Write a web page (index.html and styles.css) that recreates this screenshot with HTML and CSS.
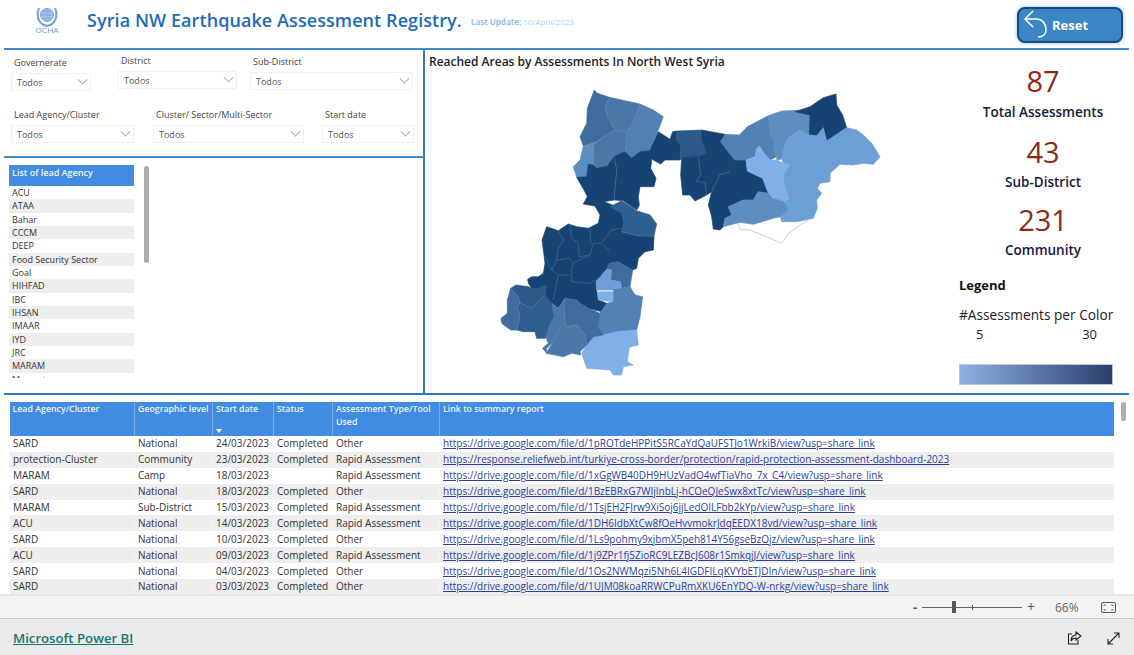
FILE: index.html
```html
<!DOCTYPE html>
<html lang="en">
<head>
<meta charset="utf-8">
<title>Syria NW Earthquake Assessment Registry</title>
<link rel="stylesheet" href="styles.css">
</head>
<body>
<div class="report">
  <header class="head">
    <div class="logo">
      <svg class="un" viewBox="0 0 24 24" width="24" height="24" fill="none" stroke="#7ba6d9">
        <circle cx="12" cy="11" r="6.5" fill="#a9c6e8" stroke-width="1"/>
        <ellipse cx="12" cy="11" rx="3" ry="6.5" stroke-width=".7"/>
        <path d="M5.5 11h13M6.500 7.500h11M6.500 14.500h11M12 4.500v13" stroke-width=".7"/>
        <path d="M4 4C1.500 9 2 16 7 20c2 1.500 3.500 1.500 5 2 1.500-.5 3-.5 5-2 5-4 5.500-11 3-16" stroke-width="2.200"/>
      </svg>
      <span class="ocha">OCHA</span>
    </div>
    <h1 class="title">Syria NW Earthquake Assessment Registry.</h1>
    <p class="update"><b>Last Update:</b> 10/April/2023</p>
    <button class="reset" type="button">
      <svg viewBox="0 0 30 36" width="30" height="36" fill="none" stroke="#fff" stroke-width="1.500">
        <path d="M12 4 4 12l8 8M4 12h11c8 0 10 7 10 11 0 4-3 7-8 7"/>
      </svg>
      <span>Reset</span>
    </button>
  </header>

  <main class="main">
    <section class="left">
      <div class="filters">
        <div class="frow frow-a">
          <div class="filter f-gov"><label>Governerate</label><div class="drop">Todos<i class="chev"></i></div></div>
          <div class="filter f-dis"><label>District</label><div class="drop">Todos<i class="chev"></i></div></div>
          <div class="filter f-sub"><label>Sub-District</label><div class="drop">Todos<i class="chev"></i></div></div>
        </div>
        <div class="frow frow-b">
          <div class="filter f-lead"><label>Lead Agency/Cluster</label><div class="drop">Todos<i class="chev"></i></div></div>
          <div class="filter f-clu"><label>Cluster/ Sector/Multi-Sector</label><div class="drop">Todos<i class="chev"></i></div></div>
          <div class="filter f-date"><label>Start date</label><div class="drop">Todos<i class="chev"></i></div></div>
        </div>
      </div>
      <div class="agency">
        <div class="alist">
          <div class="ahead">List of lead Agency</div>
          <div class="arow">ACU</div>
          <div class="arow">ATAA</div>
          <div class="arow">Bahar</div>
          <div class="arow">CCCM</div>
          <div class="arow">DEEP</div>
          <div class="arow">Food Security Sector</div>
          <div class="arow">Goal</div>
          <div class="arow">HIHFAD</div>
          <div class="arow">IBC</div>
          <div class="arow">IHSAN</div>
          <div class="arow">IMAAR</div>
          <div class="arow">IYD</div>
          <div class="arow">JRC</div>
          <div class="arow">MARAM</div>
          <div class="arow">Masarat</div>
        </div>
        <div class="ascroll"></div>
      </div>
    </section>

    <section class="mapcol">
      <h2 class="maptitle">Reached Areas by Assessments In North West Syria</h2>
      <svg class="map" viewBox="0 0 1260 900" width="420" height="300" stroke-width="2" stroke-linejoin="round">
        <polyline class="ghost" points="775,430 780,448 810,450 860,470 905,490 925,460 985,420"/>
        <polygon class="s4" points="343,30 352,40 388,52 375,85 385,115 405,150 370,170 350,185 310,198 300,170 320,130 322,85"/>
        <polygon class="s5" points="388,52 480,72 460,130 440,155 405,150 385,115 375,85"/>
        <polygon class="s6" points="480,72 520,90 550,110 535,150 508,212 480,215 455,235 435,215 440,155 460,130"/>
        <polygon class="s5" points="340,195 370,170 405,150 440,155 435,215 402,230 382,258 350,265 338,255"/>
        <polygon class="s7" points="310,198 350,185 340,195 338,255 325,252 320,290 290,292 280,260 300,240"/>
        <polygon class="s1" points="325,252 338,255 350,265 382,258 402,230 410,270 402,360 372,365 345,378 310,372 322,350 312,330 290,292 320,290"/>
        <polygon class="s1" points="402,230 435,215 455,235 480,215 508,212 515,245 512,265 528,295 522,320 480,320 475,350 478,375 470,390 430,362 402,360 410,270"/>
        <polygon class="s1" points="535,155 570,178 578,155 590,153 588,180 602,195 600,240 555,240 542,252 510,235 510,210"/>
        <polygon class="s2" points="590,153 665,150 665,180 680,220 655,230 605,233 600,240 602,195 588,180"/>
        <polygon class="s1" points="605,233 655,230 662,285 648,305 675,307 680,345 645,363 630,345 608,345 602,285"/>
        <polygon class="s1" points="665,150 735,163 722,185 745,215 755,255 750,277 720,283 695,335 680,345 675,307 648,305 662,285 655,230 680,220 665,180"/>
        <polygon class="s1" points="745,215 765,240 798,240 802,273 848,295 865,340 835,335 820,360 790,360 745,380 755,405 735,415 730,440 720,450 700,447 695,410 685,375 695,335 720,283 750,277 755,255"/>
        <polygon class="s6" points="722,185 735,163 778,165 802,140 865,107 872,165 885,185 880,210 890,230 870,240 852,220 838,198 830,205 825,230 798,240 765,240 745,215"/>
        <polygon class="s7" points="865,107 905,93 980,90 990,105 988,165 960,150 925,173 915,195 905,237 890,240 890,230 880,210 885,185 872,165"/>
        <polygon class="s1" points="945,95 990,80 1030,53 1068,42 1070,75 1088,105 1100,143 1040,183 1030,143 1010,167 988,165 990,105"/>
        <polygon class="s8" points="915,195 925,173 960,150 988,165 1010,167 1030,143 1040,183 1100,143 1130,150 1150,165 1175,190 1200,230 1180,253 1150,250 1120,255 1080,253 1050,280 1050,305 1020,310 1012,325 1025,340 1010,360 1012,385 1000,415 950,425 905,425 902,410 925,390 912,365 928,355 910,310 912,280 930,253 910,250 905,237"/>
        <polygon class="s9" points="798,240 825,230 830,205 838,198 852,220 870,240 890,240 910,250 930,253 912,280 910,310 928,355 912,365 877,355 865,340 848,295 802,273"/>
        <polygon class="s7" points="745,380 790,360 820,360 835,335 865,340 877,355 912,365 925,390 902,410 880,415 820,433 780,427 730,440 735,415 755,405"/>
        <polygon class="s1" points="345,378 372,365 405,378 425,400 432,428 425,455 475,468 522,468 520,510 495,515 475,535 470,565 458,570 430,555 415,545 388,550 380,568 348,605 350,630 355,660 380,670 365,695 345,690 325,685 300,670 290,660 255,655 235,685 215,670 200,665 195,645 200,615 175,625 155,625 145,610 143,598 155,590 175,590 190,580 195,550 190,510 186,480 200,440 235,452 265,432 290,440 325,445 355,430 360,405"/>
        <polygon class="s3" points="390,380 425,362 445,375 470,392 510,405 530,432 522,468 475,468 425,455 432,428 425,400"/>
        <polygon class="s4" points="388,550 415,545 430,555 458,570 450,620 425,625 422,605 392,600 395,570 380,568"/>
        <polygon class="s8" points="348,605 380,568 395,570 392,600 422,605 422,630 350,630"/>
        <polygon class="s9" points="352,635 402,635 400,665 355,660"/>
        <polygon class="s6" points="425,625 450,620 465,645 488,650 480,710 470,750 410,755 370,765 355,740 360,700 380,670 400,665 402,635 400,630"/>
        <polygon class="s9" points="340,770 370,765 410,755 470,750 475,795 448,802 442,845 460,855 430,860 425,885 400,885 390,870 320,865 305,820 320,795"/>
        <polygon class="s4" points="255,655 290,660 300,670 325,685 360,700 355,740 370,765 340,770 320,795 315,765 290,735 258,740 252,690"/>
        <polygon class="s5" points="215,670 235,685 255,655 252,690 258,740 242,740 220,785 200,805 200,820 188,805 205,790 192,760 205,740 220,710"/>
        <polygon class="s5" points="258,740 280,738 290,735 315,765 320,795 300,815 302,825 275,820 250,830 198,820 220,785 242,740"/>
        <polygon class="s3" points="120,668 155,685 195,645 215,670 220,710 205,740 195,775 170,775 165,755 130,755 110,750 120,710 112,682"/>
        <polygon class="s2" points="92,625 108,615 145,620 155,625 175,625 200,615 195,645 155,685 120,668 112,645"/>
        <polygon class="s4" points="92,625 112,645 120,668 112,682 120,710 110,750 92,750 65,730 63,715 82,700 82,660"/>
        <path class="seams" d="M235 455 250 480 235 505 230 540 265 535 280 548 275 570 275 605 330 610 348 598M270 435 275 475 295 490 298 530 330 525 340 490 365 490 390 515M330 445 332 490M365 490 395 450 425 445M280 548 330 525M195 530 215 570 235 585 220 660M235 585 270 585M230 540 215 570M402 230 410 270 402 360M655 230 662 285 648 305 675 307 680 345M750 277 720 283 695 335M388 52 375 85 385 115 405 150 370 170 350 185M480 72 460 130 440 155 435 215M405 150 440 155M340 195 338 255M872 165 885 185 880 210 890 230M425 455 475 468 522 468M112 645 120 668 155 685 195 645M120 668 112 682 120 710 110 750M215 670 235 685 255 655M252 690 258 740M242 740 220 785M258 740 290 735 315 765 320 795"/>
      </svg>
    </section>

    <section class="kpis">
      <div class="kpi"><span class="num">87</span><span class="kl">Total Assessments</span></div>
      <div class="kpi k2"><span class="num">43</span><span class="kl">Sub-District</span></div>
      <div class="kpi k3"><span class="num">231</span><span class="kl">Community</span></div>
      <div class="legend">
        <h3>Legend</h3>
        <p class="lsub">#Assessments per Color</p>
        <div class="lnums"><span>5</span><span>30</span></div>
        <div class="lbar"></div>
      </div>
    </section>
  </main>

  <section class="lower">
    <table class="grid">
      <colgroup>
        <col class="c1"><col class="c2"><col class="c3"><col class="c4"><col class="c5"><col class="c6">
      </colgroup>
      <thead>
        <tr>
          <th>Lead Agency/Cluster</th><th>Geographic level</th><th>Start date<i class="sort"></i></th><th>Status</th><th>Assessment Type/Tool Used</th><th>Link to summary report</th>
        </tr>
      </thead>
      <tbody>
        <tr><td>SARD</td><td>National</td><td>24/03/2023</td><td>Completed</td><td>Other</td><td><a href="#">https://drive.google.com/file/d/1pROTdeHPPitS5RCaYdQaUFSTJo1WrkiB/view?usp=share_link</a></td></tr>
        <tr><td>protection-Cluster</td><td>Community</td><td>23/03/2023</td><td>Completed</td><td>Rapid Assessment</td><td><a href="#">https://response.reliefweb.int/turkiye-cross-border/protection/rapid-protection-assessment-dashboard-2023</a></td></tr>
        <tr><td>MARAM</td><td>Camp</td><td>18/03/2023</td><td></td><td>Rapid Assessment</td><td><a href="#">https://drive.google.com/file/d/1xGgWB40DH9HUzVadO4wfTiaVho_7x_C4/view?usp=share_link</a></td></tr>
        <tr><td>SARD</td><td>National</td><td>18/03/2023</td><td>Completed</td><td>Other</td><td><a href="#">https://drive.google.com/file/d/1BzEBRxG7WIjInbLj-hCOeQJeSwx8xtTc/view?usp=share_link</a></td></tr>
        <tr><td>MARAM</td><td>Sub-District</td><td>15/03/2023</td><td>Completed</td><td>Rapid Assessment</td><td><a href="#">https://drive.google.com/file/d/1TsjEH2FJrw9XiSoj6jjLedOILFbb2kYp/view?usp=share_link</a></td></tr>
        <tr><td>ACU</td><td>National</td><td>14/03/2023</td><td>Completed</td><td>Rapid Assessment</td><td><a href="#">https://drive.google.com/file/d/1DH6IdbXtCw8fOeHvvmokrJdqEEDX18vd/view?usp=share_link</a></td></tr>
        <tr><td>SARD</td><td>National</td><td>10/03/2023</td><td>Completed</td><td>Other</td><td><a href="#">https://drive.google.com/file/d/1Ls9pohmy9xjbmX5peh814Y56gseBzOjz/view?usp=share_link</a></td></tr>
        <tr><td>ACU</td><td>National</td><td>09/03/2023</td><td>Completed</td><td>Rapid Assessment</td><td><a href="#">https://drive.google.com/file/d/1j9ZPr1fj5ZioRC9LEZBcJ608r1SmkqjJ/view?usp=share_link</a></td></tr>
        <tr><td>SARD</td><td>National</td><td>04/03/2023</td><td>Completed</td><td>Other</td><td><a href="#">https://drive.google.com/file/d/1Os2NWMqzi5Nh6L4IGDFILqKVYbETJDIn/view?usp=share_link</a></td></tr>
        <tr><td>SARD</td><td>National</td><td>03/03/2023</td><td>Completed</td><td>Other</td><td><a href="#">https://drive.google.com/file/d/1UJM08koaRRWCPuRmXKU6EnYDQ-W-nrkg/view?usp=share_link</a></td></tr>
      </tbody>
    </table>
    <div class="tscroll"></div>
  </section>
</div>

<div class="zoombar">
  <span class="zm">-</span>
  <div class="slider"><i class="thumb"></i><i class="tick"></i></div>
  <span class="zp">+</span>
  <span class="pct">66%</span>
  <svg class="fit" viewBox="0 0 15 11" width="15" height="11" fill="none" stroke="#555">
    <rect x=".5" y=".5" width="14" height="10" rx="1.500"/>
    <path d="M3 4V3h2M12 4V3h-2M3 7v1h2M12 7v1h-2" stroke-width=".8"/>
  </svg>
</div>

<footer class="foot">
  <a class="pbi" href="#">Microsoft Power BI</a>
  <svg class="share" viewBox="0 0 15 14" width="15" height="14" fill="none" stroke="#222" stroke-width="1.100">
    <path d="M5 3H1.500v10h9.500V9"/>
    <path d="M9 1l5 4-5 4V7C6.500 7 5 8 4 10c0-3.500 2-5.800 5-6z"/>
  </svg>
  <svg class="expand" viewBox="0 0 13 13" width="13" height="13" fill="none" stroke="#222" stroke-width="1.100">
    <path d="M1 12 12 1M7 1h5v5M1 7v5h5"/>
  </svg>
</footer>
</body>
</html>
```

FILE: styles.css
```css
* { box-sizing: border-box; }
html, body { margin: 0; padding: 0; }
body {
  width: 1134px;
  height: 655px;
  overflow: hidden;
  background: #fff;
  color: #333;
  font-family: "Open Sans", "Noto Sans", sans-serif;
  display: flex;
  flex-direction: column;
}
.report { height: 596px; display: flex; flex-direction: column; background: #fff; flex: none; }

.head { height: 48px; display: flex; align-items: flex-start; flex: none; }
.logo { width: 87px; height: 48px; display: flex; flex-direction: column; align-items: center; padding: 4px 0 0 7px; }
.un { display: block; }
.ocha { font: 8px/9px "Liberation Sans", sans-serif; color: #6d9dd0; margin-top: -2px; }
.title { margin: 7px 0 0; font-size: 18px; line-height: 27px; font-weight: 600; color: #1e6bb4; letter-spacing: .08px; white-space: nowrap; }
.update { margin: 16px 0 0 9px; font-size: 8px; line-height: 12px; color: #a9cdf2; white-space: nowrap; }
.update b { color: #93c1ef; font-weight: 700; }
.reset {
  margin: 7px 11px 0 auto;
  width: 106px;
  height: 36px;
  padding: 0 0 0 2px;
  display: flex;
  align-items: center;
  gap: 1px;
  background: #3d86c6;
  border: 2px solid #164b7c;
  border-radius: 8px;
  box-shadow: 0 0 4px #8fc1ee;
  color: #fff;
  font: 700 13px/1 "Open Sans", sans-serif;
}

.main {
  height: 347px;
  margin: 0 5px 0 4px;
  display: grid;
  grid-template-columns: 421px 1fr 184px;
  border-top: 2px solid #418ad2;
  border-bottom: 2px solid #2f79c4;
  flex: none;
}
.left { border-right: 2px solid #2f79c4; display: flex; flex-direction: column; min-height: 0; }
.filters { height: 108px; border-bottom: 2px solid #418ad2; flex: none; padding: 7px 0 0 7px; }
.frow { display: flex; align-items: flex-start; }
.frow-a { height: 49px; }
.frow-b { padding-top: 3px; }
.filter label { display: block; font-size: 9px; line-height: 12px; color: #444; padding-left: 3px; white-space: nowrap; }
.drop {
  height: 18px;
  margin-top: 4px;
  padding: 0 4px 0 5px;
  border: 1px solid #f0f0f0;
  font-size: 9px;
  line-height: 17px;
  color: #555;
  display: flex;
  align-items: center;
  justify-content: space-between;
}
.chev { width: 7px; height: 7px; border-right: 1px solid #aaa; border-bottom: 1px solid #aaa; transform: rotate(45deg) translate(-2px, -2px); }
.f-gov { width: 80px; }
.f-dis { width: 119px; margin-left: 27px; margin-top: -2px; }
.f-sub { width: 163px; margin-left: 13px; margin-top: -1px; }
.f-lead { width: 123px; }
.f-clu { width: 151px; margin-left: 19px; }
.f-date { width: 92px; margin-left: 18px; }

.agency { flex: 1; display: flex; align-items: flex-start; padding: 7px 0 0 5px; min-height: 0; }
.alist { width: 125px; height: 213px; overflow: hidden; }
.ahead { height: 21px; padding: 2px 3px 0; background: #428de0; color: #eef5fd; font-size: 9px; line-height: 12px; font-weight: 600; }
.arow { height: 13.350px; padding-left: 3px; font-size: 9px; line-height: 13.350px; color: #333; white-space: nowrap; }
.arow:nth-child(odd) { background: #eeeeee; }
.ascroll { width: 5px; height: 97px; margin: 1px 0 0 10px; background: #b0aeab; border-radius: 3px; }

.mapcol { padding: 3px 0 0 4px; min-width: 0; }
.maptitle { margin: 0; font-size: 12px; line-height: 18px; font-weight: 600; color: #222; white-space: nowrap; }
.map { display: block; margin: 9px 0 0 51px; }
.ghost { fill: none; stroke: #cfcfcf; stroke-width: 3; }
.seams { fill: none; stroke: #7d8da0; stroke-width: 1.500; stroke-opacity: .75; }
.s1 { fill: #154373; stroke: #154373; }
.s2 { fill: #2b5a8a; stroke: #2b5a8a; }
.s3 { fill: #2f5f90; stroke: #2f5f90; }
.s4 { fill: #3f6c9e; stroke: #3f6c9e; }
.s5 { fill: #4a78a9; stroke: #4a78a9; }
.s6 { fill: #5281b5; stroke: #5281b5; }
.s7 { fill: #5e8ebf; stroke: #5e8ebf; }
.s8 { fill: #6c9fd5; stroke: #6c9fd5; }
.s9 { fill: #7fb0e8; stroke: #7fb0e8; }

.kpis { display: flex; flex-direction: column; align-items: center; min-width: 0; padding-left: 12px; }
.kpi { display: flex; flex-direction: column; align-items: center; width: 100%; }
.num { font-size: 29px; line-height: 40px; color: #8b2a16; margin-top: 11px; font-weight: 400; }
.kl { font-size: 13.500px; line-height: 18px; font-weight: 600; color: #14193c; margin-top: 2px; white-space: nowrap; }
.k2 .num { margin-top: 11px; }
.k3 .num { margin-top: 9px; }
.k2 .kl { margin-top: 1px; }
.k3 { height: 69px; overflow: hidden; flex: none; }
.k3 .kl { margin-top: 1px; }
.legend { align-self: stretch; padding: 0 0 0 2px; margin-top: 16px; }
.legend h3 { margin: 0; font-size: 13px; line-height: 18px; font-weight: 700; color: #111; }
.lsub { margin: 12px 0 0; font-size: 13.700px; line-height: 18px; color: #222; white-space: nowrap; }
.lnums { display: flex; justify-content: space-between; width: 121px; margin-left: 17px; font-size: 13px; line-height: 18px; margin-top: 1px; color: #222; }
.lbar { width: 154px; height: 21px; margin-top: 21px; background: linear-gradient(90deg, #8fb0e2, #2b3f6e); border: 1px solid #b9c8de; }

.lower { padding: 7px 0 0 9px; display: flex; align-items: flex-start; flex: 1; min-height: 0; border-bottom: 2px solid #e6e6e6; overflow: hidden; }
.grid { width: 1104px; table-layout: fixed; border-collapse: collapse; font-size: 10px; color: #333; flex: none; }
.c1 { width: 125px; } .c2 { width: 78px; } .c3 { width: 61px; } .c4 { width: 59px; } .c5 { width: 107px; } .c6 { width: 674px; }
.grid th {
  height: 34px;
  background: #418ce0;
  color: #eaf3fd;
  font-size: 8.800px;
  line-height: 13px;
  font-weight: 600;
  text-align: left;
  vertical-align: top;
  padding: 1px 0 0 3px;
  border-left: 1px solid #77ade8;
  position: relative;
}
.grid th:first-child { border-left: 0; }
.sort { position: absolute; left: 3px; bottom: 3px; border: 3px solid transparent; border-top: 4px solid #fff; border-bottom: 0; }
.grid td { height: 15.900px; padding: 0 0 0 3px; line-height: 15px; white-space: nowrap; border-left: 1px solid transparent; }
.grid tbody tr:nth-child(even) td { background: #eeeeee; border-left-color: #f4f4f4; }
.grid a { color: #2a3f9e; text-decoration: underline; }
.tscroll { width: 5px; height: 19px; margin-left: 7px; background: #b0aeab; border-radius: 2px; flex: none; }

.zoombar { height: 22px; background: #f3f3f3; display: flex; align-items: center; flex: none; padding-left: 913px; color: #555; }
.zm { width: 9px; font-size: 13px; line-height: 1; font-weight: 700; }
.slider { width: 100px; height: 1px; background: #666; position: relative; }
.thumb { position: absolute; left: 30px; top: -6px; width: 4px; height: 12px; background: #555; }
.tick { position: absolute; left: 50px; top: -2px; width: 1px; height: 5px; background: #555; }
.zp { margin-left: 5px; width: 10px; font-size: 14px; line-height: 1; }
.pct { margin-left: 18px; font-size: 12px; color: #666; width: 46px; }

.foot { flex: 1; background: #eaeaea; border-top: 1px solid #c9c9c9; display: flex; align-items: center; padding: 2px 14px 0 13px; }
.pbi { font-size: 13.200px; font-weight: 600; color: #137a72; text-decoration: underline; }
.share { margin-left: auto; margin-right: 25px; }
```
